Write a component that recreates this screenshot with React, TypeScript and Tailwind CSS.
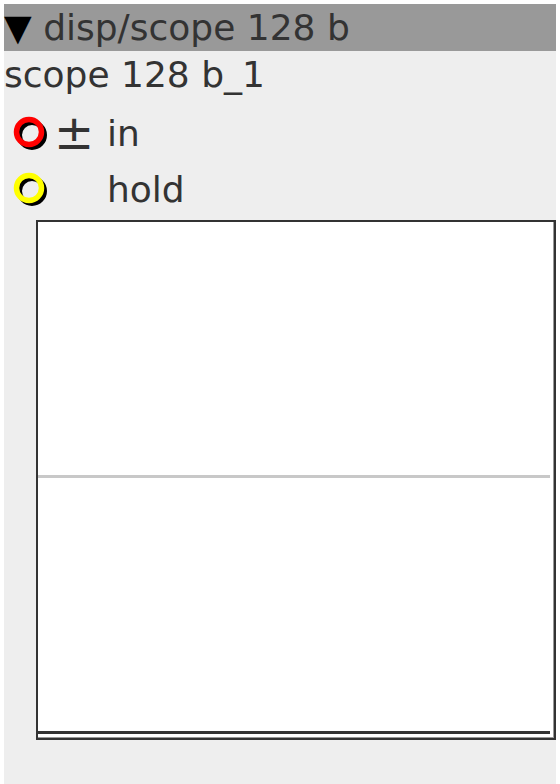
const FONT = "font-['DejaVu_Sans',sans-serif]";

function Port({ color }: { color: string }) {
  // ring with a black drop shadow, like the patch cable inlets
  return (
    <svg width="40" height="40" viewBox="0 0 40 40" className="shrink-0">
      <circle cx="20" cy="23" r="12.5" fill="none" stroke="#000" strokeWidth="5" />
      <circle cx="17" cy="20" r="12.5" fill="none" stroke={color} strokeWidth="5.5" />
    </svg>
  );
}

function PortRow({ color, sign, label }: { color: string; sign?: string; label: string }) {
  return (
    <div className="flex h-[56px] items-center">
      <div className="ml-[8px] flex">
        <Port color={color} />
      </div>
      <div className="ml-[2px] w-[53px] text-[48px] leading-[42px] text-[#333]">{sign ?? ""}</div>
      <div className="pt-[3px] text-[#333]">{label}</div>
    </div>
  );
}

export default function App() {
  return (
    <div className={`min-h-[784px] bg-white pl-[4px] pt-[4px] text-[36px] leading-[42px] ${FONT}`}>
      <div className="flex min-h-[780px] w-[552px] flex-col bg-[#eeeeee]">
        <div className="flex h-[47px] items-center bg-[#999999] text-[#333]">
          <span className="text-black">▼</span>
          <span>&nbsp;disp/scope 128 b</span>
        </div>
        <div className="mt-[3px] text-[#333]">scope 128 b_1</div>
        <div className="mt-[8px] flex flex-col">
          <PortRow color="#ff0000" sign="±" label="in" />
          <PortRow color="#ffff00" label="hold" />
        </div>
        <div className="ml-[32px] mt-[4px] h-[520px] w-[520px] border-2 border-[#333] bg-white">
          <div className="h-full w-full border-b border-r border-[#999]">
            <div className="flex h-[512px] w-[512px] flex-col">
              <div className="flex-1" />
              <div className="h-[3px] bg-[#c8c8c8]" />
              <div className="flex-1" />
              <div className="h-[3px] bg-[#333]" />
            </div>
          </div>
        </div>
      </div>
    </div>
  );
}
